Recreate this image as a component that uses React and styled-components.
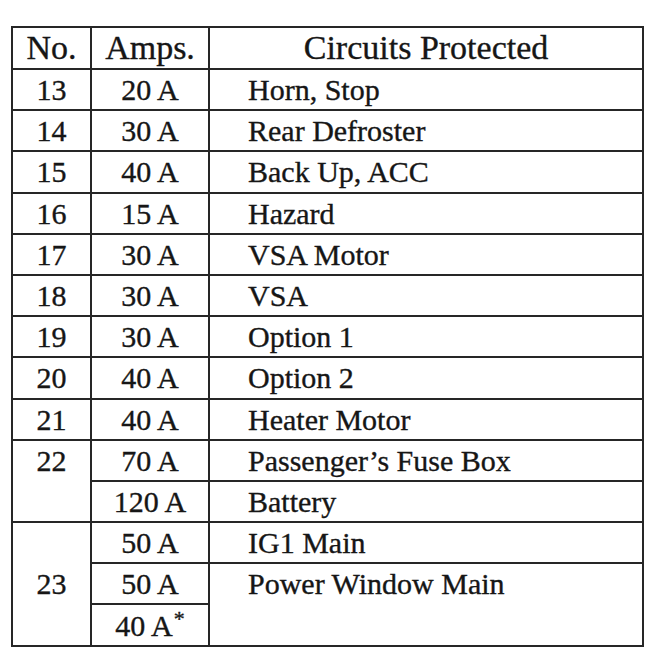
import React from 'react';
import styled, { createGlobalStyle } from 'styled-components';

const GlobalStyle = createGlobalStyle`
  html, body {
    margin: 0;
    padding: 0;
    background: #ffffff;
  }
  body {
    font-family: "Liberation Serif", "Times New Roman", serif;
    color: #161616;
    -webkit-text-stroke: 0.35px #161616;
  }
`;

const Page = styled.div`
  padding: 26px 0 0 11px;
`;

const Table = styled.table`
  border-collapse: collapse;
  table-layout: fixed;
  width: 631px;
  border: 2px solid #262626;
`;

const Col = styled.col`
  width: ${p => p.$w}px;
`;

const HeadCell = styled.th`
  height: 40px;
  padding: 0;
  border: 2px solid #262626;
  font-size: 34px;
  font-weight: normal;
  line-height: 40px;
  text-align: center;
  vertical-align: middle;
`;

const Cell = styled.td`
  height: 39.2px;
  padding: 0 0 0 ${p => (p.$left ? 38 : 0)}px;
  border: 2px solid #262626;
  font-size: 30px;
  line-height: 39px;
  text-align: ${p => (p.$left ? 'left' : 'center')};
  vertical-align: ${p => (p.$top ? 'top' : 'middle')};
  white-space: nowrap;
`;

const Star = styled.sup`
  font-size: 22px;
  line-height: 0;
  vertical-align: 10px;
  margin-left: 1px;
`;

const simple = [
  ['13', '20 A', 'Horn, Stop'],
  ['14', '30 A', 'Rear Defroster'],
  ['15', '40 A', 'Back Up, ACC'],
  ['16', '15 A', 'Hazard'],
  ['17', '30 A', 'VSA Motor'],
  ['18', '30 A', 'VSA'],
  ['19', '30 A', 'Option 1'],
  ['20', '40 A', 'Option 2'],
  ['21', '40 A', 'Heater Motor'],
];

export default function App() {
  return (
    <>
      <GlobalStyle />
      <Page>
        <Table>
          <colgroup>
            <Col $w={79} />
            <Col $w={118} />
            <Col $w={434} />
          </colgroup>
          <thead>
            <tr>
              <HeadCell>No.</HeadCell>
              <HeadCell>Amps.</HeadCell>
              <HeadCell>Circuits Protected</HeadCell>
            </tr>
          </thead>
          <tbody>
            {simple.map(([no, amps, circuit]) => (
              <tr key={no}>
                <Cell>{no}</Cell>
                <Cell>{amps}</Cell>
                <Cell $left>{circuit}</Cell>
              </tr>
            ))}
            <tr>
              <Cell rowSpan={2} $top>22</Cell>
              <Cell>70 A</Cell>
              <Cell $left>Passenger’s Fuse Box</Cell>
            </tr>
            <tr>
              <Cell>120 A</Cell>
              <Cell $left>Battery</Cell>
            </tr>
            <tr>
              <Cell rowSpan={3}>23</Cell>
              <Cell>50 A</Cell>
              <Cell $left>IG1 Main</Cell>
            </tr>
            <tr>
              <Cell>50 A</Cell>
              <Cell rowSpan={2} $left $top>Power Window Main</Cell>
            </tr>
            <tr>
              <Cell>40 A<Star>*</Star></Cell>
            </tr>
          </tbody>
        </Table>
      </Page>
    </>
  );
}
